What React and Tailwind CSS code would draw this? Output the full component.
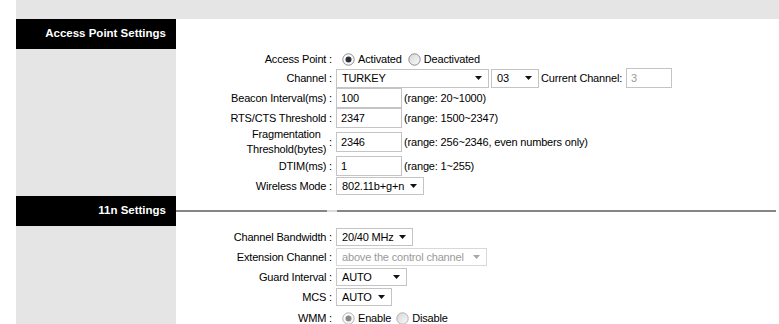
import React from "react";

const Radio = ({ checked, disabled }) => (
  <svg width="13" height="13" viewBox="0 0 13 13" className="shrink-0">
    <defs>
      <linearGradient id={checked ? "rgc" : "rgu"} x1="0" y1="0" x2="1" y2="1">
        <stop offset="0" stopColor={checked ? "#ffffff" : "#d6d6d6"} />
        <stop offset="1" stopColor={checked ? "#f4f4f4" : "#fbfbfb"} />
      </linearGradient>
    </defs>
    <circle cx="6.5" cy="6.5" r="5.7" fill={`url(#${checked ? "rgc" : "rgu"})`} stroke={disabled ? "#b0b0b0" : "#8c8c8c"} strokeWidth="1" />
    {checked && <circle cx="6.5" cy="6.5" r="3" fill={disabled ? "#8a8a8a" : "#2a2f38"} />}
  </svg>
);

const Arrow = ({ disabled }) => (
  <svg width="7" height="4" viewBox="0 0 7 4" className="shrink-0">
    <path d="M0 0 L7 0 L3.5 4 Z" fill={disabled ? "#a8a8a8" : "#111"} />
  </svg>
);

const Select = ({ w, value, disabled, h = "h-[19px]" }) => (
  <div
    className={`${w} ${h} flex items-center justify-between border ${disabled ? "border-[#d8d8d8] text-[#9a9a9a]" : "border-[#c4c4c4] text-black"} bg-white pl-[5px] pr-[6px]`}
  >
    <span className="whitespace-nowrap">{value}</span>
    <Arrow disabled={disabled} />
  </div>
);

const Input = ({ w = "w-[66px]", value, disabled }) => (
  <div
    className={`${w} h-[20px] flex items-center border border-[#c4c4c4] bg-white pl-[4px] ${disabled ? "text-[#9a9a9a]" : "text-black"}`}
  >
    {value}
  </div>
);

const Row = ({ h, label, children }) => (
  <div className={`flex items-center ${h}`}>
    <div className="w-[156px] shrink-0 text-right whitespace-nowrap">{label}</div>
    <div className="ml-[4px] flex items-center">{children}</div>
  </div>
);

const Range = ({ children }) => <span className="ml-[2px] whitespace-nowrap">{children}</span>;

const Header = ({ title, line }) => (
  <div className="flex h-[30px]">
    <div className="w-[160px] shrink-0 bg-black text-white font-bold text-[11.5px] tracking-normal flex items-center justify-end pr-[10px]">
      {title}
    </div>
    <div className="flex-1 flex items-center pr-[3px]">
      {line && (
        <div className="flex w-full h-[2px]">
          <div className="w-[151px] bg-[#858585]" />
          <div className="w-[10px] bg-[#dcdcdc]" />
          <div className="flex-1 bg-[#858585]" />
        </div>
      )}
    </div>
  </div>
);

const Body = ({ children, pt }) => (
  <div className="flex">
    <div className="w-[160px] shrink-0 bg-[#e5e5e5]" />
    <div className={`flex-1 flex flex-col ${pt}`}>{children}</div>
  </div>
);

export default function App() {
  return (
    <div
      className="w-[779px] h-[324px] overflow-hidden bg-white text-[11px] tracking-[-0.17px] text-black pl-[16px]"
      style={{ fontFamily: '"Liberation Sans", Arial, sans-serif' }}
    >
      <div className="h-[19px] bg-[#e5e5e5]" />
      <Header title="Access Point Settings" />
      <Body pt="pt-[2px]">
        <Row h="h-[17px]" label="Access Point :">
          <div className="flex items-center ml-[6px]">
            <Radio checked />
            <span className="ml-[3px]">Activated</span>
            <span className="ml-[6px]"><Radio /></span>
            <span className="ml-[3px]">Deactivated</span>
          </div>
        </Row>
        <Row h="h-[20px]" label="Channel :">
          <Select w="w-[153px]" value="TURKEY" />
          <div className="ml-[2px]">
            <Select w="w-[48px]" value="03" />
          </div>
          <span className="ml-[2px] whitespace-nowrap">Current Channel:</span>
          <div className="ml-[4px]">
            <Input w="w-[46px]" value="3" disabled />
          </div>
        </Row>
        <Row h="h-[20px]" label="Beacon Interval(ms) :">
          <Input value="100" />
          <Range>(range: 20~1000)</Range>
        </Row>
        <Row h="h-[20px]" label="RTS/CTS Threshold :">
          <Input value="2347" />
          <Range>(range: 1500~2347)</Range>
        </Row>
        <Row
          h="h-[28px]"
          label={
            <div className="flex items-center justify-end">
              <div className="text-center leading-[15px]">
                Fragmentation
                <br />
                Threshold(bytes)
              </div>
              <span>&nbsp;:</span>
            </div>
          }
        >
          <Input value="2346" />
          <Range>(range: 256~2346, even numbers only)</Range>
        </Row>
        <Row h="h-[20px]" label="DTIM(ms) :">
          <Input value="1" />
          <Range>(range: 1~255)</Range>
        </Row>
        <Row h="h-[20px]" label="Wireless Mode :">
          <Select w="w-[88px]" h="h-[18px]" value="802.11b+g+n" />
        </Row>
      </Body>
      <Header title="11n Settings" line />
      <Body pt="pt-[1px]">
        <Row h="h-[20px]" label="Channel Bandwidth :">
          <Select w="w-[77px]" h="h-[18px]" value="20/40 MHz" />
        </Row>
        <Row h="h-[20px]" label="Extension Channel :">
          <Select w="w-[151px]" h="h-[18px]" value="above the control channel" disabled />
        </Row>
        <Row h="h-[20px]" label="Guard Interval :">
          <Select w="w-[71px]" h="h-[18px]" value="AUTO" />
        </Row>
        <Row h="h-[20px]" label="MCS :">
          <Select w="w-[56px]" h="h-[18px]" value="AUTO" />
        </Row>
        <Row h="h-[22px]" label="WMM :">
          <div className="flex items-center ml-[6px]">
            <Radio checked disabled />
            <span className="ml-[3px]">Enable</span>
            <span className="ml-[5px]"><Radio disabled /></span>
            <span className="ml-[3px]">Disable</span>
          </div>
        </Row>
      </Body>
    </div>
  );
}
